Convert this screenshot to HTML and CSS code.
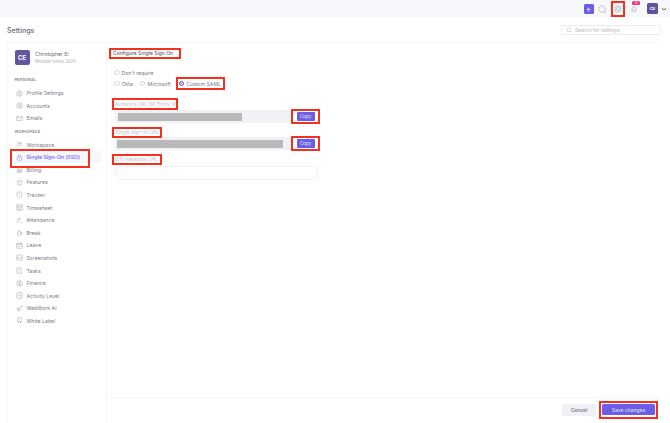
FILE: index.html
```html
<!DOCTYPE html>
<html lang="en">
<head>
<meta charset="UTF-8">
<title>Settings</title>
<link rel="stylesheet" href="styles.css">
</head>
<body>
<div class="topbar">
    <div class="plus">+</div>
    <svg class="top-ico" viewBox="0 0 10 10"><path d="M5 1a4 4 0 1 0 1.8 7.6L9 9 8.4 6.9A4 4 0 0 0 5 1z"/></svg>
    <div class="gear-wrap">
        <svg class="top-ico" viewBox="0 0 10 10"><circle cx="5" cy="5" r="4"/><circle cx="5" cy="5" r="2"/></svg>
    </div>
    <div class="bell-wrap">
        <svg class="top-ico" viewBox="0 0 10 10"><path d="M2 7.5c1-1 .6-2.5 1-3.7C3.4 2.6 4.2 2 5 2s1.6.6 2 1.8c.4 1.2 0 2.700 1 3.700zM4.200 8.800h1.600"/></svg>
        <span class="badge">10</span>
    </div>
    <div class="top-avatar">CE</div>
    <svg class="chev" viewBox="0 0 8 5"><path d="M1 1l3 3 3-3"/></svg>
</div>

<div class="head">
    <div class="title">Settings</div>
    <div class="search">
        <svg viewBox="0 0 10 10"><circle cx="4.5" cy="4.5" r="3.2"/><path d="M7 7l2 2"/></svg>
        <span>Search for settings</span>
    </div>
</div>

<div class="card">
    <div class="side">
        <div class="user">
            <div class="avatar">CE</div>
            <div>
                <div class="uname">Christopher El</div>
                <div class="since">Member since 2024</div>
            </div>
        </div>
        <div class="group">PERSONAL</div>
        <a class="item"><svg viewBox="0 0 10 10"><circle cx="5" cy="5" r="4"/><circle cx="5" cy="4" r="1.3"/><path d="M3 7.5c.8-1.200 3.200-1.200 4 0"/></svg>Profile Settings</a>
        <a class="item"><svg viewBox="0 0 10 10"><circle cx="5" cy="5" r="4"/><circle cx="5" cy="4.5" r="1.5"/><path d="M3 8l1-2M7 8L6 6"/></svg>Accounts</a>
        <a class="item"><svg viewBox="0 0 10 10"><rect x="1" y="2" width="8" height="6" rx=".6"/><path d="M1 3l4 2.5L9 3"/></svg>Emails</a>
        <div class="group group-2">WORKSPACE</div>
        <a class="item"><svg viewBox="0 0 10 10"><circle cx="3.5" cy="3" r="1.4"/><circle cx="7" cy="3" r="1.2"/><path d="M1 8c0-3 5-3 5 0M6.500 5.500c1.500 0 2.500 1 2.500 2.500"/></svg>Workspace</a>
        <a class="item active"><svg viewBox="0 0 10 10"><rect x="2" y="4.3" width="6" height="4.7" rx=".8"/><path d="M3.300 4.300V3a1.700 1.700 0 0 1 3.400 0v1.300M5 6v1.300"/></svg><span>Single Sign-On (SSO)</span></a>
        <a class="item"><svg viewBox="0 0 10 10"><path d="M2.500 1h5v6h-5zM1 9c0-1.200.8-2 1.500-2h6v2zM4 3h2M4 4.800h2"/></svg>Billing</a>
        <a class="item"><svg viewBox="0 0 10 10"><path d="M5 1l1.200 2.600L9 4 7 6l.5 3L5 7.600 2.500 9 3 6 1 4l2.800-.4z"/></svg>Features</a>
        <a class="item"><svg viewBox="0 0 10 10"><circle cx="5" cy="5" r="4"/><path d="M5 2.800V5l1.600 1"/></svg>Tracker</a>
        <a class="item"><svg viewBox="0 0 10 10"><rect x="1" y="1" width="8" height="8" rx=".6"/><path d="M1 3.500h8M3.500 3.500V9M5 5.500h2.500M5 7.300h2.500"/></svg>Timesheet</a>
        <a class="item"><svg viewBox="0 0 10 10"><circle cx="4.3" cy="3" r="1.7"/><path d="M1.500 9c0-2.500 1.200-3.300 2.800-3.300M6 8h3"/></svg>Attendance</a>
        <a class="item"><svg viewBox="0 0 10 10"><path d="M2 4h5v3a2 2 0 0 1-2 2H4a2 2 0 0 1-2-2zM7 4.800h.8a1 1 0 0 1 0 2.200H7M4.500 1v1.800"/></svg>Break</a>
        <a class="item"><svg viewBox="0 0 10 10"><rect x="1" y="2" width="8" height="7" rx=".6"/><path d="M1 4h8M3 1v2M7 1v2M3.500 6.200l1 1 2-2"/></svg>Leave</a>
        <a class="item"><svg viewBox="0 0 10 10"><rect x="1" y="1.5" width="8" height="7" rx=".6"/><path d="M1 6.500l2.500-2 2 1.500L7 4.800l2 1.700"/></svg>Screenshots</a>
        <a class="item"><svg viewBox="0 0 10 10"><path d="M8 5.500V9H1.500V1.500H8M3.500 4.500l1.500 1.500L9 2"/></svg>Tasks</a>
        <a class="item"><svg viewBox="0 0 10 10"><circle cx="5" cy="5" r="4"/><path d="M6.300 3.500C5.800 3 4 2.900 4 4s2.300.9 2.300 2-1.900 1-2.500.4M5 2.300v5.400"/></svg>Finance</a>
        <a class="item"><svg viewBox="0 0 10 10"><rect x="1" y="1" width="8" height="8" rx="1.5"/><path d="M2.800 5.200h1.200l1-2 1 3.400.6-1.400h.8"/></svg>Activity Level</a>
        <a class="item"><svg viewBox="0 0 10 10"><path d="M4 3l.8 2.200L7 6l-2.200.8L4 9l-.8-2.200L1 6l2.200-.8zM8 1l.3.7.7.3-.7.3L8 3l-.3-.7L7 2l.7-.3z"/></svg>WebWork AI</a>
        <a class="item"><svg viewBox="0 0 10 10"><path d="M2.500 1h5v5.500h-5zM3.500 6.500V9M6.500 6.500V9"/></svg>White Label</a>
    </div>

    <div class="main">
        <div class="content">
            <div class="heading mark">Configure Single Sign On</div>
            <div class="radios">
                <label class="radio"><i></i>Don't require</label>
            </div>
            <div class="radios radios-row">
                <label class="radio"><i></i>Okta</label>
                <label class="radio"><i></i>Microsoft</label>
                <label class="radio mark saml"><i class="on"></i>Custom SAML</label>
            </div>
            <div class="field-label mark first">Audience URI (SP Entity ID)</div>
            <div class="copy-row copy-first">
                <div class="url-box"><div class="blur w1"></div></div>
                <div class="copy-mark"><button>Copy</button></div>
            </div>
            <div class="field-label mark">Single sign on URL</div>
            <div class="copy-row">
                <div class="url-box"><div class="blur w2"></div></div>
                <div class="copy-mark"><button>Copy</button></div>
            </div>
            <div class="field-label mark">IDP metadata URL</div>
            <div class="empty-box"></div>
        </div>
        <div class="footer">
            <button class="cancel">Cancel</button>
            <div class="save-mark"><button class="save">Save changes</button></div>
        </div>
    </div>
</div>
</body>
</html>
```

FILE: styles.css
```css
*{
    margin:0;
    padding:0;
    box-sizing:border-box;
}
html,body{
    height:423px;
    overflow:hidden;
}
body{
    background:#fff;
    font-family:"Inter","Liberation Sans",sans-serif;
    color:#5c5f6e;
    font-size:5.2px;
}
svg{
    fill:none;
    stroke:#8d8f9a;
    stroke-width:.6;
    flex:none;
}

/* top bar */
.topbar{
    height:17px;
    background:#f7f8fc;
    display:flex;
    align-items:center;
    justify-content:flex-end;
    padding-right:3px;
}
.plus{
    width:10px;
    height:10px;
    border-radius:1.5px;
    background:#6c5ce7;
    color:#fff;
    font-size:8px;
    line-height:10px;
    text-align:center;
    margin-right:4.5px;
}
.top-ico{
    width:8px;
    height:8px;
}
.gear-wrap{
    width:14px;
    height:16px;
    outline:2px solid #f5301c;
    outline-offset:-2px;
    display:flex;
    align-items:center;
    justify-content:center;
    margin-left:5px;
}
.bell-wrap{
    position:relative;
    display:flex;
    margin-left:5px;
    margin-right:9px;
    width:8px;
}
.badge{
    position:absolute;
    left:2px;
    top:-4px;
    width:8px;
    height:4px;
    border-radius:1.5px;
    background:#f0326e;
    color:#fff;
    font-size:3px;
    line-height:4px;
    text-align:center;
}
.top-avatar{
    width:11px;
    height:11px;
    border-radius:1.5px;
    background:#5b549d;
    color:#fff;
    font-size:4px;
    font-weight:700;
    line-height:11px;
    text-align:center;
}
.chev{
    width:6px;
    height:4px;
    margin-left:3px;
    stroke:#333;
    stroke-width:1;
}

/* page head */
.head{
    height:25px;
    display:flex;
    align-items:center;
    justify-content:space-between;
    padding:1px 9px 0 7px;
}
.title{
    font-size:7px;
    font-weight:500;
    color:#6a6c77;
}
.search{
    width:100px;
    height:10px;
    border:.5px solid #eaebef;
    border-radius:1.5px;
    display:flex;
    align-items:center;
    gap:3px;
    padding-left:4px;
    color:#b8bac3;
    font-size:5px;
}
.search svg{
    width:6px;
    height:6px;
}

/* card */
.card{
    display:flex;
    margin-left:7px;
    width:654px;
    height:381px;
    border-left:.5px solid #f7f7f9;
    border-top:.5px solid #f7f7f9;
}
.side{
    width:99px;
    flex:none;
    border-right:.5px solid #f6f6f9;
    padding:7px 0 0 6.5px;
}
.user{
    display:flex;
    align-items:center;
    gap:5.5px;
    height:15px;
    margin-bottom:12px;
}
.avatar{
    width:15px;
    height:15px;
    border-radius:2px;
    background:#5f58a0;
    color:#fff;
    font-size:6px;
    font-weight:700;
    line-height:15px;
    text-align:center;
}
.uname{
    font-size:5px;
    color:#6a6c7a;
    margin-bottom:1.5px;
}
.since{
    font-size:4.3px;
    color:#a9abb8;
}
.group{
    font-size:3.9px;
    font-weight:600;
    color:#858794;
    height:6px;
    line-height:6px;
    margin-bottom:4px;
    letter-spacing:.1px;
}
.group-2{
    margin-top:4px;
    margin-bottom:3.5px;
}
.item{
    display:flex;
    align-items:center;
    gap:4px;
    height:12.6px;
    margin-left:1px;
    color:#7a7c8a;
    white-space:nowrap;
}
.item svg{
    width:7px;
    height:7px;
}
.active{
    color:#7f70ee;
    font-weight:600;
    background:#f6f6fd;
    margin-right:5px;
    position:relative;
}
.active svg{
    stroke:#7f70ee;
}
.active::after{
    content:"";
    position:absolute;
    left:-6px;
    top:-2px;
    width:76px;
    height:15px;
    border:2px solid #f5301c;
}

/* main */
.main{
    flex:1;
    display:flex;
    flex-direction:column;
}
.content{
    flex:1;
    padding:5px 0 0 2px;
}
.mark{
    outline:2px solid #f5301c;
    outline-offset:-2px;
}
.heading{
    width:72px;
    height:11px;
    line-height:11px;
    padding-left:4px;
    font-size:5px;
    font-weight:500;
    color:#5f616d;
    white-space:nowrap;
}
.radios{
    display:flex;
    align-items:center;
    margin:7px 0 0 5px;
    height:13px;
    gap:7px;
    color:#7a7c8a;
}
.radios-row{
    margin-top:-2px;
}
.radio{
    display:flex;
    align-items:center;
    gap:2px;
    white-space:nowrap;
}
.radio i{
    width:5.5px;
    height:5.5px;
    border-radius:50%;
    border:.5px solid #d4d5dc;
}
.radio i.on{
    border:.5px solid #6c5ce7;
    background:#6c5ce7;
    box-shadow:inset 0 0 0 1px #fff;
}
.saml{
    width:49px;
    height:13px;
    padding-left:3px;
    margin-left:-2px;
}
.field-label{
    width:50px;
    height:11px;
    line-height:11px;
    padding-left:3px;
    margin:3px 0 0 3px;
    color:#c0c2cb;
    font-size:5px;
    white-space:nowrap;
}
.first{
    width:66px;
    height:12px;
    line-height:12px;
    margin-top:8px;
    font-size:4.9px;
}
.copy-row{
    display:flex;
    align-items:center;
    height:15px;
    margin-left:6px;
    margin-top:-2px;
}
.copy-first{
    margin-top:-1px;
}
.url-box{
    width:176px;
    height:13px;
    background:#f0f2f8;
    padding:3px;
}
.blur{
    height:7.5px;
    background:#b9b9ba;
}
.w1{
    width:124px;
}
.w2{
    width:166px;
    margin-left:-1px;
}
.copy-mark{
    width:29px;
    height:15px;
    outline:2px solid #f5301c;
    outline-offset:-2px;
    display:flex;
    align-items:center;
    justify-content:center;
}
.copy-mark button{
    width:18px;
    height:9px;
    background:#6c5ce7;
    color:#ddd;
    border:0;
    border-radius:1px;
    font:500 4.6px "Inter","Liberation Sans",sans-serif;
}
.empty-box{
    width:203px;
    height:14px;
    margin:1px 0 0 5.5px;
    border:.5px solid #f2f3f6;
    border-radius:1.5px;
}
.footer{
    display:flex;
    justify-content:flex-end;
    align-items:center;
    gap:3px;
    height:26px;
    border-top:.5px solid #f6f6f9;
    padding:0 3px 2px 0;
}
.cancel{
    width:34px;
    height:12px;
    background:#f0f1f6;
    color:#6a6c7a;
    border:0;
    border-radius:1.5px;
    font:500 5px "Inter","Liberation Sans",sans-serif;
}
.save-mark{
    width:59px;
    height:18px;
    outline:2px solid #f5301c;
    outline-offset:-2px;
    display:flex;
    align-items:center;
    justify-content:center;
}
.save{
    width:53px;
    height:11px;
    background:#6c5ce7;
    color:#ddd;
    border:0;
    border-radius:1.5px;
    font:500 5px "Inter","Liberation Sans",sans-serif;
}
```
